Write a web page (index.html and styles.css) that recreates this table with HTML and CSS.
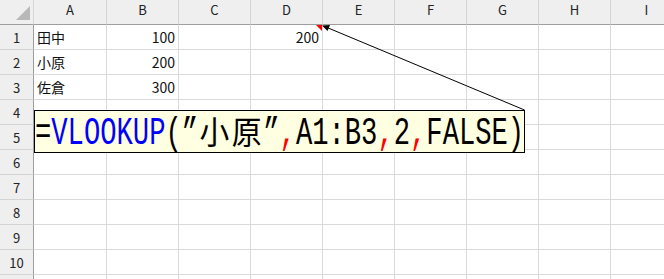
FILE: index.html
```html
<!DOCTYPE html>
<html lang="ja">
<head>
<meta charset="utf-8">
<link rel="stylesheet" href="styles.css">
</head>
<body>
<div class="sheet">
  <div class="corner"><span class="corner-tri"></span></div>
  <div class="ch">A</div><div class="ch">B</div><div class="ch">C</div><div class="ch">D</div><div class="ch">E</div><div class="ch">F</div><div class="ch">G</div><div class="ch">H</div><div class="ch">I</div>

  <div class="rh">1</div><div class="c">田中</div><div class="c num">100</div><div class="c"></div><div class="c num note">200</div><div class="c"></div><div class="c"></div><div class="c"></div><div class="c"></div><div class="c"></div>
  <div class="rh">2</div><div class="c">小原</div><div class="c num">200</div><div class="c"></div><div class="c"></div><div class="c"></div><div class="c"></div><div class="c"></div><div class="c"></div><div class="c"></div>
  <div class="rh">3</div><div class="c">佐倉</div><div class="c num">300</div><div class="c"></div><div class="c"></div><div class="c"></div><div class="c"></div><div class="c"></div><div class="c"></div><div class="c"></div>
  <div class="rh">4</div><div class="c"></div><div class="c"></div><div class="c"></div><div class="c"></div><div class="c"></div><div class="c"></div><div class="c"></div><div class="c"></div><div class="c"></div>
  <div class="rh">5</div><div class="c"></div><div class="c"></div><div class="c"></div><div class="c"></div><div class="c"></div><div class="c"></div><div class="c"></div><div class="c"></div><div class="c"></div>
  <div class="rh">6</div><div class="c"></div><div class="c"></div><div class="c"></div><div class="c"></div><div class="c"></div><div class="c"></div><div class="c"></div><div class="c"></div><div class="c"></div>
  <div class="rh">7</div><div class="c"></div><div class="c"></div><div class="c"></div><div class="c"></div><div class="c"></div><div class="c"></div><div class="c"></div><div class="c"></div><div class="c"></div>
  <div class="rh">8</div><div class="c"></div><div class="c"></div><div class="c"></div><div class="c"></div><div class="c"></div><div class="c"></div><div class="c"></div><div class="c"></div><div class="c"></div>
  <div class="rh">9</div><div class="c"></div><div class="c"></div><div class="c"></div><div class="c"></div><div class="c"></div><div class="c"></div><div class="c"></div><div class="c"></div><div class="c"></div>
  <div class="rh">10</div><div class="c"></div><div class="c"></div><div class="c"></div><div class="c"></div><div class="c"></div><div class="c"></div><div class="c"></div><div class="c"></div><div class="c"></div>
  <div class="rh"></div><div class="c"></div><div class="c"></div><div class="c"></div><div class="c"></div><div class="c"></div><div class="c"></div><div class="c"></div><div class="c"></div><div class="c"></div>
</div>

<svg class="arrow" width="664" height="279" viewBox="0 0 664 279">
  <line x1="524.5" y1="110" x2="327" y2="27.5" stroke="#000" stroke-width="1"/>
  <polygon points="322,25.5 327.5,31 330,25" fill="#000"/>
</svg>

<div class="comment">
  <span class="formula"><span>=</span><span class="fn">VLOOKUP</span><span>(”</span><span class="kanji"><span class="kg">小</span></span><span class="kanji"><span class="kg">原</span></span><span>”</span><span class="sep">,</span><span>A1:B3</span><span class="sep">,</span><span>2</span><span class="sep">,</span><span>FALSE)</span></span>
</div>
</body>
</html>
```

FILE: styles.css
```css
html, body {
  margin: 0;
  padding: 0;
  background: #fff;
  width: 664px;
  height: 279px;
  overflow: hidden;
  position: relative;
}

.sheet {
  display: grid;
  grid-template-columns: 34px 73px repeat(8, 72px);
  grid-template-rows: 25px repeat(10, 25px) 5px;
  font-family: "Noto Sans CJK JP", "Noto Sans", sans-serif;
  font-size: 14px;
  color: #111;
  overflow: hidden;
}

.sheet > div {
  box-sizing: border-box;
}

.corner {
  background: #efefef;
  border-right: 1px solid #d6d6d6;
  border-bottom: 1px solid #9e9e9e;
  position: relative;
}

.corner-tri {
  position: absolute;
  right: 3px;
  bottom: 4px;
  width: 0;
  height: 0;
  border-bottom: 14px solid #b8b8b8;
  border-left: 14px solid transparent;
}

.ch {
  background: #efefef;
  border-right: 1px solid #d4d4d4;
  border-bottom: 1px solid #9e9e9e;
  display: flex;
  justify-content: center;
  align-items: center;
  padding-bottom: 5px;
  font-size: 13px;
  color: #222;
}

.rh {
  background: #efefef;
  border-right: 1px solid #9e9e9e;
  border-bottom: 1px solid #d4d4d4;
  display: flex;
  justify-content: center;
  align-items: center;
  font-size: 13px;
  color: #222;
  padding-top: 1px;
}

.c {
  border-right: 1px solid #dadada;
  border-bottom: 1px solid #dadada;
  display: flex;
  align-items: center;
  padding: 0 3px;
  white-space: nowrap;
}

.num {
  justify-content: flex-end;
}

.note {
  position: relative;
}

.note::after {
  content: "";
  position: absolute;
  top: 0;
  right: 0;
  width: 0;
  height: 0;
  border-top: 6px solid #ff0000;
  border-left: 6px solid transparent;
}

.arrow {
  position: absolute;
  left: 0;
  top: 0;
  pointer-events: none;
}

.comment {
  position: absolute;
  left: 34px;
  top: 110px;
  width: 491px;
  height: 43px;
  box-sizing: border-box;
  border: 1px solid #000;
  background: #ffffe1;
  display: flex;
  align-items: center;
  overflow: hidden;
}

.formula {
  display: inline-block;
  white-space: nowrap;
  font-family: "Liberation Mono", "Noto Sans CJK JP", monospace;
  font-size: 38px;
  line-height: 40px;
  color: #000;
  transform: scaleX(0.715);
  transform-origin: left center;
}

.fn {
  color: #0000ff;
}

.sep {
  color: #ff0000;
}

.kanji {
  display: inline-block;
  width: 45.6px;
  text-align: center;
}

.kg {
  display: inline-block;
  font-family: "Noto Sans CJK JP", sans-serif;
  font-size: 32px;
  transform: scaleX(1.3);
}
```
